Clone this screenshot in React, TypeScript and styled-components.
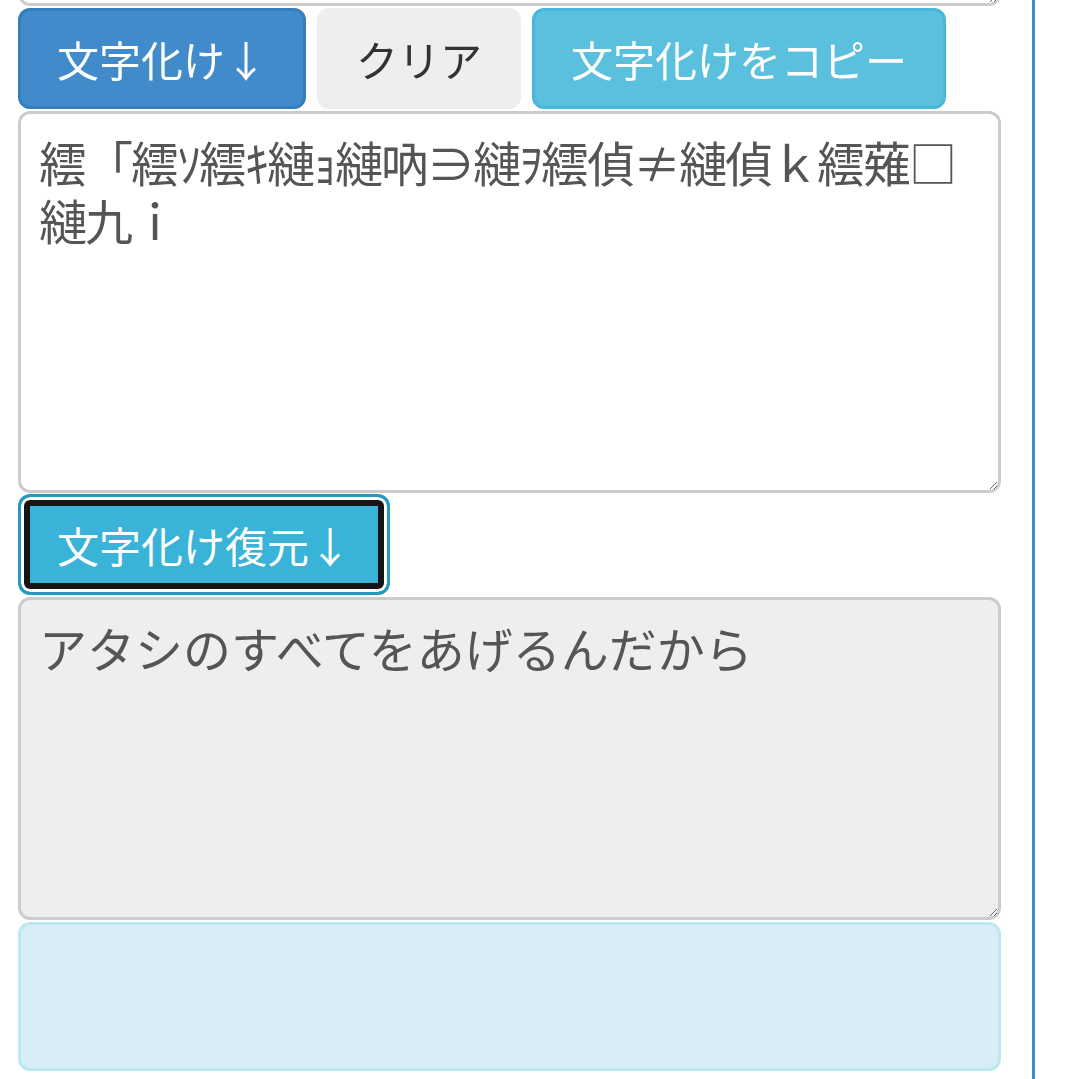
import * as React from 'react';
import styled, { createGlobalStyle } from 'styled-components';

const GlobalStyle = createGlobalStyle`
  html, body {
    margin: 0;
    padding: 0;
    background: #fff;
  }
  body {
    font-family: "Noto Sans CJK JP", "Noto Sans", sans-serif;
    color: #333;
  }
`;

const colors = {
  PRIMARY: '#428bca',
  PRIMARY_BORDER: '#357ebd',
  INFO: '#5bc0de',
  INFO_BORDER: '#46b8da',
  INFO_ACTIVE: '#39b3d7',
  INFO_ACTIVE_BORDER: '#269abc',
  TEXT: '#555',
  INPUT_BORDER: '#ccc',
};

const Page = styled.div`
  display: flex;
  width: 100%;
  height: 1079px;
  overflow: hidden;
`;

const Column = styled.div`
  width: 983px;
  padding: 0 31px 0 18px;
  border-right: 3px solid ${colors.PRIMARY};
  display: flex;
  flex-direction: column;
`;

const TextArea = styled.textarea<{ $h: number; $readOnlyLook?: boolean; $tight?: boolean }>`
  display: block;
  box-sizing: border-box;
  width: 100%;
  height: ${(p) => p.$h}px;
  margin: 0;
  padding: 18px 18px;
  font-family: "Noto Sans CJK JP", "Noto Sans", sans-serif;
  font-size: 48px;
  line-height: 58px;
  letter-spacing: ${(p) => (p.$tight ? '-2px' : 'normal')};
  color: ${colors.TEXT};
  background: ${(p) => (p.$readOnlyLook ? '#eee' : '#fff')};
  border: 3px solid ${colors.INPUT_BORDER};
  border-radius: 12px;
  resize: vertical;
  outline: none;
  word-break: break-all;
`;

const TopArea = styled(TextArea)`
  margin-top: -54px;
`;

const ButtonRow = styled.div<{ $mt: number }>`
  display: flex;
  gap: 11px;
  margin-top: ${(p) => p.$mt}px;
  margin-bottom: 2px;
`;

type Variant = 'primary' | 'default' | 'info' | 'infoFocus';

const variantStyles: Record<Variant, string> = {
  primary: `background: ${colors.PRIMARY}; border-color: ${colors.PRIMARY_BORDER}; color: #fff;`,
  default: `background: #eee; border-color: #eee; color: #333;`,
  info: `background: ${colors.INFO}; border-color: ${colors.INFO_BORDER}; color: #fff;`,
  infoFocus: `background: ${colors.INFO_ACTIVE}; border-color: ${colors.INFO_ACTIVE_BORDER}; color: #fff;
    box-shadow: inset 0 0 0 3px #fff, inset 0 0 0 9px #151515;`,
};

const Button = styled.button<{ $variant: Variant }>`
  box-sizing: border-box;
  height: 101px;
  padding: 18px 36px;
  font-family: "Noto Sans CJK JP", "Noto Sans", sans-serif;
  font-size: 42px;
  line-height: 60px;
  border: 3px solid transparent;
  border-radius: 12px;
  white-space: nowrap;
  cursor: pointer;
  ${(p) => variantStyles[p.$variant]}
`;

const Alert = styled.div`
  box-sizing: border-box;
  height: 149px;
  margin-top: 2px;
  background: #d9edf7;
  border: 3px solid #bce8f1;
  border-radius: 12px;
`;

const garbled = '繧「繧ｿ繧ｷ縺ｮ縺吶∋縺ｦ繧偵≠縺偵ｋ繧薙□縺九ｉ';
const restored = 'アタシのすべてをあげるんだから';

const App: React.FC = () => (
  <>
    <GlobalStyle />
    <Page>
      <Column>
        <TopArea $h={60} defaultValue="" />
        <ButtonRow $mt={2}>
          <Button $variant="primary">文字化け↓</Button>
          <Button $variant="default">クリア</Button>
          <Button $variant="info">文字化けをコピー</Button>
        </ButtonRow>
        <TextArea $h={382} $tight defaultValue={garbled} />
        <ButtonRow $mt={1}>
          <Button $variant="infoFocus">文字化け復元↓</Button>
        </ButtonRow>
        <TextArea $h={323} $readOnlyLook readOnly defaultValue={restored} />
        <Alert />
      </Column>
    </Page>
  </>
);

export default App;
